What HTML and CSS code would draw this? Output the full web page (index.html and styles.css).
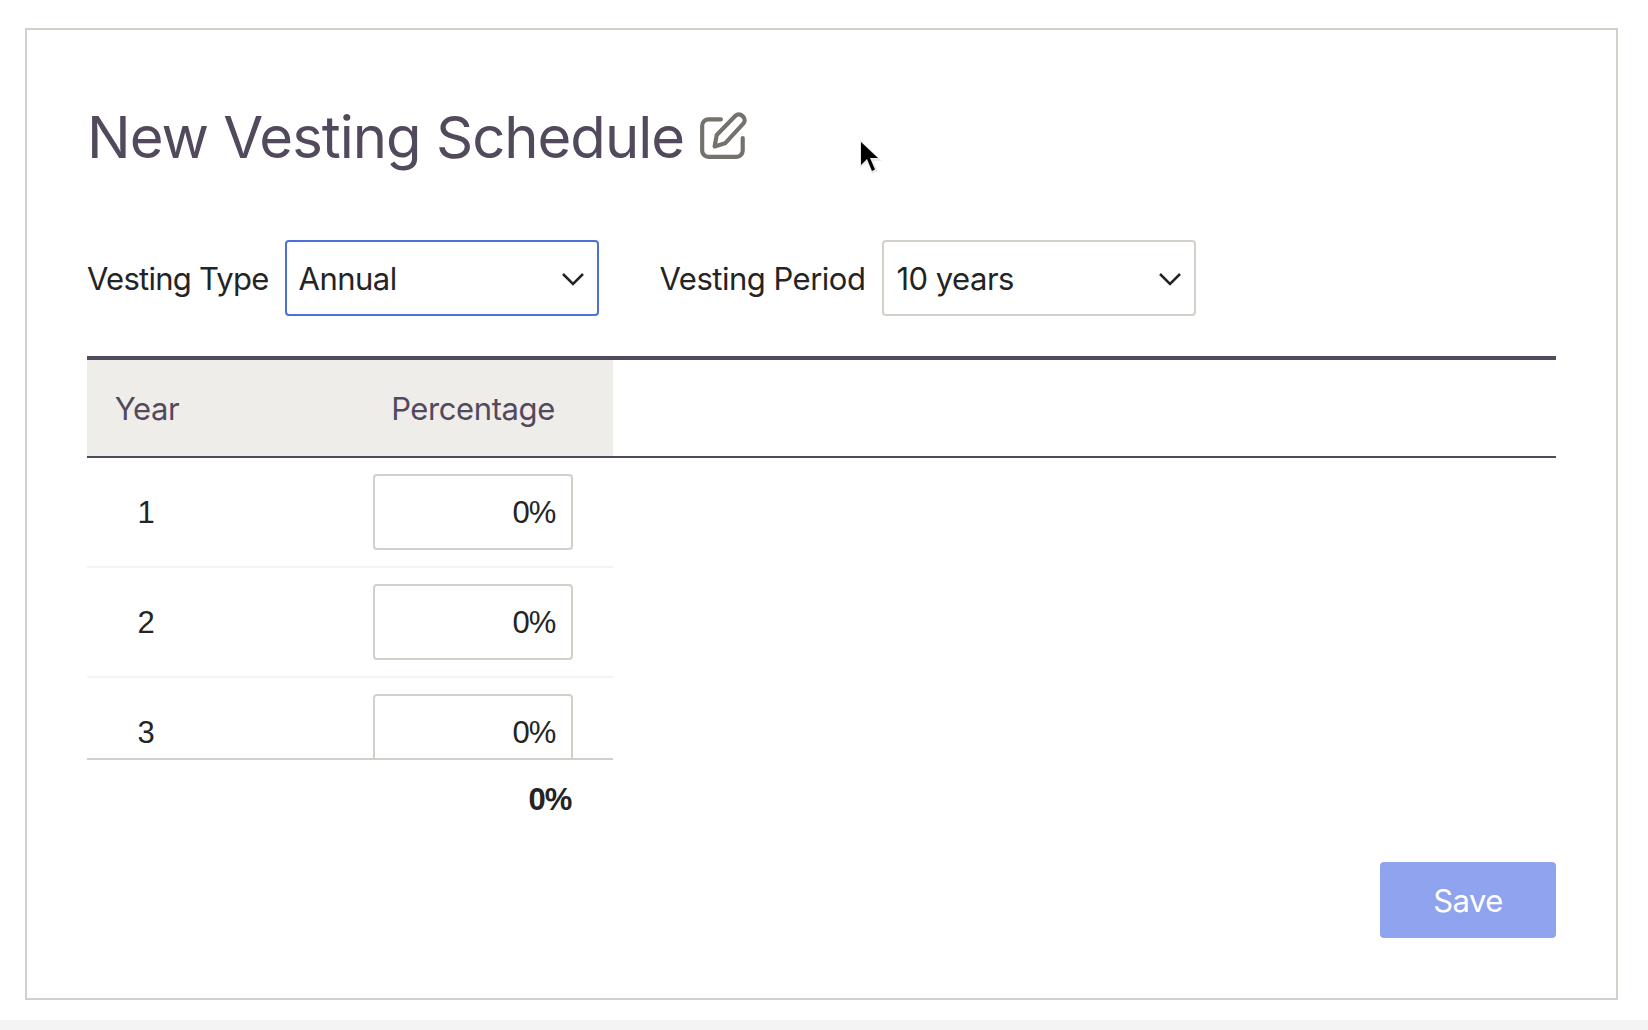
FILE: index.html
```html
<!DOCTYPE html>
<html lang="en">
<head>
<meta charset="utf-8">
<title>New Vesting Schedule</title>
<link rel="stylesheet" href="styles.css">
</head>
<body>
<main class="page">
  <section class="card">
    <header class="title-row">
      <h1 class="title">New Vesting Schedule</h1>
      <svg class="edit-icon" viewBox="0 0 50 50" width="52" height="52" aria-hidden="true">
        <path d="M22 10H10a6 6 0 0 0-6 6v24a6 6 0 0 0 6 6h27a6 6 0 0 0 6-6V28"/>
        <path d="M18 25L36 6.500a4.500 4.500 0 0 1 6.500 0l1 1a4.500 4.500 0 0 1 0 6.500L26 33l-10 3z"/>
      </svg>
    </header>
    <div class="filters">
      <label class="field">
        <span class="field-label field-label-tight">Vesting Type</span>
        <span class="select select-focus">Annual
          <svg class="chevron" viewBox="0 0 24 14" width="24" height="14" aria-hidden="true"><path d="M2 2l10 10L22 2"/></svg>
        </span>
      </label>
      <label class="field field-wide">
        <span class="field-label">Vesting Period</span>
        <span class="select">10 years
          <svg class="chevron" viewBox="0 0 24 14" width="24" height="14" aria-hidden="true"><path d="M2 2l10 10L22 2"/></svg>
        </span>
      </label>
    </div>
    <div class="table">
      <div class="table-head">
        <div class="head-cells">
          <div class="cell-year">Year</div>
          <div class="cell-pct">Percentage</div>
        </div>
      </div>
      <div class="table-body">
        <div class="row"><div class="cell-year num">1</div><div class="cell-pct"><div class="pct-input">0%</div></div></div>
        <div class="row"><div class="cell-year num">2</div><div class="cell-pct"><div class="pct-input">0%</div></div></div>
        <div class="row"><div class="cell-year num">3</div><div class="cell-pct"><div class="pct-input">0%</div></div></div>
      </div>
      <div class="total">0%</div>
    </div>
    <div class="actions"><button class="save" type="button">Save</button></div>
    <svg class="cursor" viewBox="0 0 26 38" width="26" height="38" aria-hidden="true">
      <path class="cursor-halo" d="M3 2v28l7-6 5 12 6-3-5-10h9z"/>
      <path class="cursor-arrow" d="M4 4v23l6-6 5 12 3-1.500-5-11.500h8z"/>
    </svg>
  </section>
  <div class="bottom-strip"></div>
</main>
</body>
</html>
```
FILE: styles.css
```css
* { box-sizing: border-box; }
html, body { margin: 0; padding: 0; background: #fff; }
body { font-family: "Inter", "Liberation Sans", sans-serif; color: #242424; }
.page { width: 1648px; height: 1030px; padding-top: 28px; display: flex; flex-direction: column; overflow: hidden; }
.card {
  position: relative;
  width: 1593px; height: 972px; margin-left: 25px;
  border: 2px solid #d5cfc9;
  padding: 71px 60px 60px;
  display: flex; flex-direction: column;
}
.title-row { display: flex; align-items: center; height: 72px; gap: 14px; }
.title { margin: 0; font-size: 58px; font-weight: 400; line-height: 72px; color: #524a5c; letter-spacing: -1px; }
.edit-icon { fill: none; stroke: #75716c; stroke-width: 4; stroke-linecap: round; stroke-linejoin: round; flex: none; margin-top: -4px; }
.filters { display: flex; gap: 61px; margin-top: 67px; }
.field { display: flex; align-items: center; gap: 16px; }
.field-wide { gap: 17px; }
.field-label { font-size: 31px; line-height: 40px; letter-spacing: -0.5px; padding-top: 2px; }
.field-label-tight { letter-spacing: -0.75px; }
.select {
  position: relative;
  width: 314px; height: 76px;
  display: flex; align-items: center; justify-content: space-between;
  padding: 0 12px;
  border: 2px solid #d5cfc9; border-radius: 4px;
  font-size: 31px; letter-spacing: -0.5px; background: #fff;
}
.select-focus { border-color: #4f6fd8; }
.chevron { fill: none; stroke: #242424; stroke-width: 2.500; flex: none; margin-top: 2px; }
.table { margin-top: 40px; border-top: 4px solid #524a5c; }
.table-head { border-bottom: 2px solid #524a5c; height: 98px; }
.head-cells { width: 526px; height: 96px; background: #efedea; display: flex; align-items: center; color: #524a5c; font-size: 31px; letter-spacing: -0.4px; }
.cell-year { width: 120px; flex: none; text-align: center; }
.cell-pct { width: 406px; padding-left: 166px; padding-right: 40px; flex: none; text-align: center; white-space: nowrap; }
.table-body { width: 526px; height: 302px; overflow: hidden; border-bottom: 2px solid #d5cfc9; }
.row { height: 110px; display: flex; align-items: flex-start; padding-top: 16px; border-bottom: 2px solid #f6f4f1; }
.num { font-family: "Liberation Sans", sans-serif; line-height: 78px; font-size: 31px; padding-right: 2px; }
.pct-input {
  width: 200px; height: 76px;
  border: 2px solid #d5cfc9; border-radius: 4px;
  display: flex; align-items: center; justify-content: flex-end;
  padding: 2px 16px 0 0;
  font-family: "Liberation Sans", sans-serif;
  font-size: 31px;
  letter-spacing: -1.2px;
}
.total { width: 484px; text-align: right; font-family: "Liberation Sans", sans-serif; font-size: 31px; font-weight: 700; letter-spacing: -1.2px; line-height: 40px; margin-top: 20px; }
.actions { display: flex; justify-content: flex-end; margin-top: auto; }
.save {
  width: 176px; height: 76px;
  border: 0; border-radius: 4px;
  background: #8fa3ef; color: #fff;
  font: 400 31px "Inter", "Liberation Sans", sans-serif;
  letter-spacing: -0.5px;
}
.cursor { position: absolute; left: 830px; top: 108px; }
.cursor-halo { fill: #e4e4e4; opacity: .8; }
.cursor-arrow { fill: #000; }
.bottom-strip { height: 10px; margin-top: 20px; background: #f4f4f4; flex: none; }
```
